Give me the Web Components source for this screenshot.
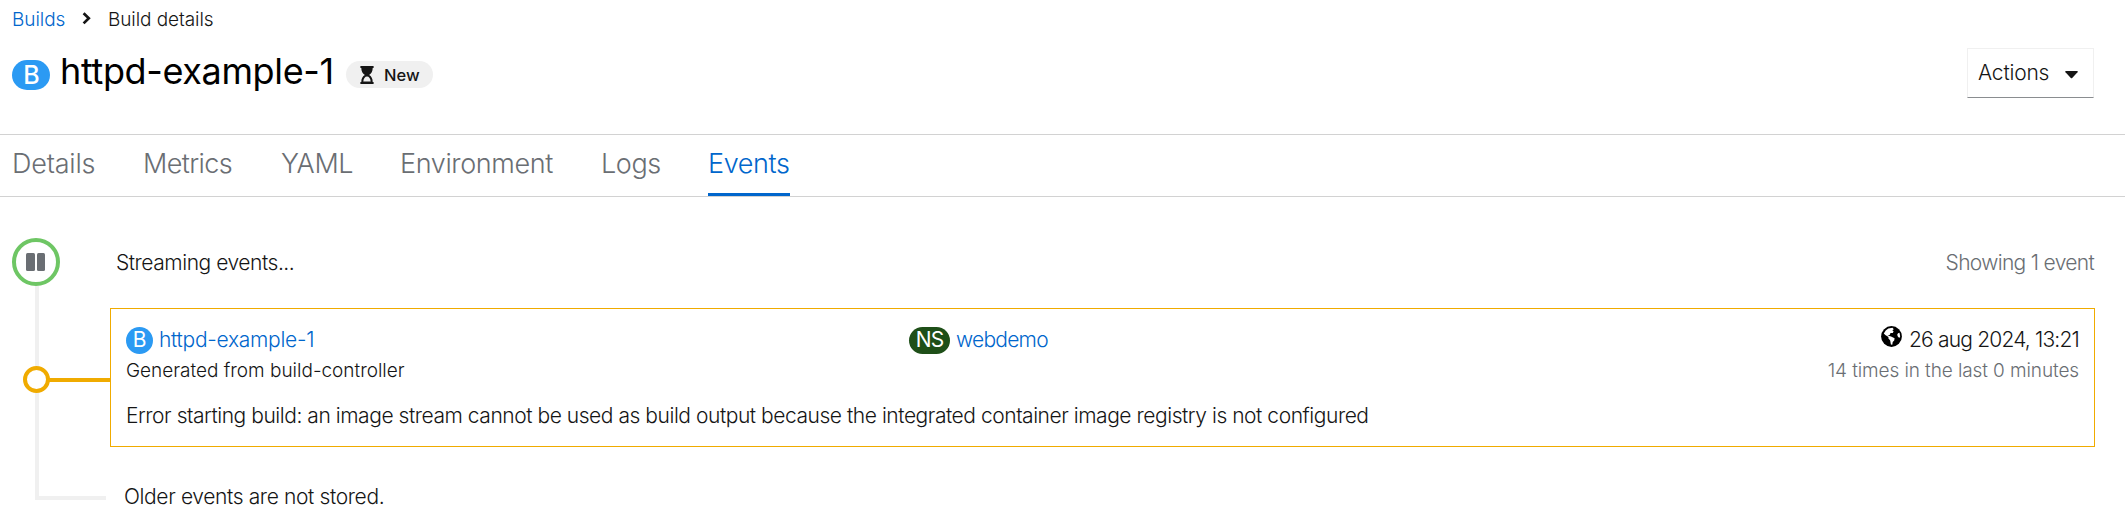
<!DOCTYPE html>
<html lang="en"><head><meta charset="utf-8"><title>httpd-example-1 · Build details</title>
<style>
html,body{margin:0;background:#fff}
body{font:300 21px/30px Inter,"Open Sans",sans-serif;color:#151515;height:522px;overflow:hidden}
</style></head>
<body>
<build-page></build-page>
<script>
const define=(name,html)=>{
  const t=document.createElement('template');t.innerHTML=html;
  customElements.define(name,class extends HTMLElement{
    constructor(){super();this.attachShadow({mode:'open'}).append(t.content.cloneNode(true));}
  });
};

define('crumb-trail',`<style>
:host{display:flex;align-items:center;height:38px;padding:1px 0 0 12px;box-sizing:border-box;font-size:19px;line-height:37px}
a{color:#06c;width:70px;letter-spacing:-.05px}
svg{width:9px;height:13px;margin-top:-3px;margin-right:17px}
span{letter-spacing:-.08px;color:#151515}
</style><a>Builds</a><svg viewBox="0 0 9 13"><path d="M1.6 1.2 6.8 6.3 1.6 11.4" fill="none" stroke="#151515" stroke-width="2.7"/></svg><span>Build details</span>`);

define('kind-badge',`<style>
:host{display:inline-flex;align-items:center;justify-content:center;flex:none;box-sizing:border-box;width:27px;height:27px;border-radius:14px;background:#2b9af3;color:#fff;font-size:21px;line-height:25px;padding-bottom:2px;font-weight:400}
:host([large]){width:38px;height:30px;border-radius:15px;font-size:25px;font-weight:500;line-height:30px;padding:0 0 1px 1px}
:host([ns]){width:41px;background:#1e4f18;letter-spacing:-.8px}
</style><slot></slot>`);

define('status-label',`<style>
:host{display:flex;align-items:center;box-sizing:border-box;width:87px;height:27px;border-radius:14px;background:#f0f0f0;padding-left:14px;font-size:16.5px;font-weight:500;letter-spacing:.05px;line-height:27px}
svg{width:14px;height:18px;margin-right:10px;flex:none}
span{padding-top:1px}
</style><svg viewBox="0 0 14 18"><path d="M.4 0h13.2v2.1h-.9c0 3.3-1.300 5.700-3.600 6.900 2.300 1.200 3.600 3.600 3.600 6.900h.9V18H.4v-2.100h.9c0-3.300 1.300-5.700 3.600-6.900C2.600 7.800 1.300 5.400 1.300 2.100H.4zM3.300 15.600h7.400C10.500 12.600 9 10.600 7 10.600s-3.500 2-3.700 5z" fill="#151515" fill-rule="evenodd"/></svg><span><slot></slot></span>`);

define('action-menu',`<style>
:host{display:flex;align-items:center;box-sizing:border-box;width:127px;height:50px;border:1px solid #f0f0f0;border-bottom-color:#8a8d90;padding-left:10px;line-height:48px}
span{width:87px;letter-spacing:-.2px}
svg{width:13px;height:8px;margin-top:3px}
</style><span>Actions</span><svg viewBox="0 0 13 8"><path d="M.9 0h11.200q1.200.2.4 1.300L7.200 7q-.7.600-1.400 0L.5 1.300Q-.3.200.9 0z" fill="#151515"/></svg>`);

define('page-heading',`<style>
:host{display:flex;height:96px;padding:10px 31px 0 12px;box-sizing:border-box}
kind-badge{margin-top:12px}
h1{margin:0;width:286px;padding-left:10px;font-size:36px;line-height:47px;font-weight:400;color:#000;white-space:nowrap;letter-spacing:-.36px}
status-label{margin-top:13px;margin-right:auto}
</style><kind-badge large>B</kind-badge><h1>httpd-example-1</h1><status-label>New</status-label><action-menu></action-menu>`);

define('tab-item',`<style>
:host{display:block;height:61px;box-sizing:border-box;font-size:27px;line-height:58px;color:#6a6e73;white-space:nowrap;letter-spacing:-.38px}
:host([active]){color:#06c;border-bottom:3px solid #06c}
</style><slot></slot>`);

define('tab-bar',`<style>
:host{display:grid;grid-template-columns:131px 138px 119px 201px 107px 82px;height:63px;box-sizing:border-box;padding-left:12px;border-top:1px solid #d2d2d2;border-bottom:1px solid #d2d2d2}
</style><tab-item style="letter-spacing:-.2px">Details</tab-item><tab-item style="letter-spacing:-.6px">Metrics</tab-item><tab-item>YAML</tab-item><tab-item>Environment</tab-item><tab-item>Logs</tab-item><tab-item active>Events</tab-item>`);

define('stream-toggle',`<style>
:host{display:flex;align-items:center;justify-content:center;gap:2px;box-sizing:border-box;width:48px;height:48px;border:4px solid #6ec664;border-radius:50%;background:#fff;padding-right:1px}
i{width:8.500px;height:18px;border-radius:1.500px;background:#6a6e73;margin-top:-1px}
</style><i></i><i></i>`);

define('event-card',`<style>
:host{display:block;box-sizing:border-box;height:139px;border:1px solid #f0ab00;padding:15px 15px 0;color:#151515}
.row{display:grid;grid-template-columns:783px 1fr auto;height:29px}
.cell{display:flex;align-items:center;height:33px;white-space:nowrap}
a{color:#06c;margin-left:6px;line-height:31px;padding-bottom:2px}
.sub{display:flex;justify-content:space-between;font-size:19px;line-height:32px;height:32px;padding-top:2px;box-sizing:border-box}
.muted{color:#6a6e73}
p{margin:16px 0 0;line-height:30px;letter-spacing:-.455px;white-space:nowrap}
svg{width:21px;height:21px;margin:-8px 7px 0 0}
time{letter-spacing:-.820px;line-height:31px;padding-bottom:2px}
</style>
<div class="row">
<div class="cell"><kind-badge>B</kind-badge><a style="letter-spacing:-.28px">httpd-example-1</a></div>
<div class="cell"><kind-badge ns>NS</kind-badge><a style="letter-spacing:-.75px">webdemo</a></div>
<div class="cell"><svg viewBox="0 0 21 21"><circle cx="10.500" cy="10.500" r="10.400" fill="#000"/><path d="M4.700 4.600 7.300 2.400 11.500 1.700 12.800 3.300 11.300 4.200 12.600 5.200 11.800 6.900 9.500 7.100 8.700 8.900 6.500 9.600 10 10.600 13.600 12.200 13.200 14.500 11.700 16.100 11.300 18.700 9.900 18.500 9.200 14.600 7.300 12.300 7.500 10.900 4.300 9 2.800 7.600zM17 7.200 18.500 6.800 19.200 10.400 18.300 12 16.800 10.600 16.200 8.700z" fill="#fff"/></svg><time>26 aug 2024, 13:21</time></div>
</div>
<div class="sub"><span style="letter-spacing:-.01px">Generated from build-controller</span><span class="muted" style="letter-spacing:-.1px">14 times in the last 0 minutes</span></div>
<p>Error starting build: an image stream cannot be used as build output because the integrated container image registry is not configured</p>`);

define('event-marker',`<style>
:host{display:flex;align-items:center;height:27px}
b{box-sizing:border-box;width:27px;height:27px;border:4px solid #f0ab00;border-radius:50%;background:#fff}
i{flex:1;height:4px;background:#f0ab00;margin:1px 0 0 -1px}
</style><b></b><i></i>`);

define('event-stream',`<style>
:host{display:grid;grid-template-columns:98px 1fr;grid-template-rows:70px 139px 53px;padding:41px 30px 0 12px}
.rail{grid-column:1;grid-row:1/4;display:flex;flex-direction:column}
.line{width:4px;background:#f0f0f0;margin-left:23px;flex:none}
event-marker{margin-left:11px}
.foot{margin-left:23px;width:71px;height:107px;box-sizing:border-box;border-left:4px solid #f0f0f0;border-bottom:4px solid #f0f0f0}
.head{grid-column:2;display:flex;justify-content:space-between;padding:0 1px 0 6px;line-height:49px}
.head span:first-child{letter-spacing:-.46px}
.muted{color:#6a6e73;letter-spacing:-.680px}
.old{grid-column:2;padding-left:14px;line-height:99px;letter-spacing:-.370px;height:75px;white-space:nowrap}
event-card{grid-column:2}
</style>
<div class="rail"><stream-toggle></stream-toggle><div class="line" style="height:80px"></div><event-marker></event-marker><div class="foot"></div></div>
<div class="head"><span>Streaming events...</span><span class="muted">Showing 1 event</span></div>
<event-card></event-card>
<div class="old">Older events are not stored.</div>`);

define('build-page',`<style>:host{display:block;width:2125px}</style>
<crumb-trail></crumb-trail><page-heading></page-heading><tab-bar></tab-bar><event-stream></event-stream>`);
</script></body></html>
